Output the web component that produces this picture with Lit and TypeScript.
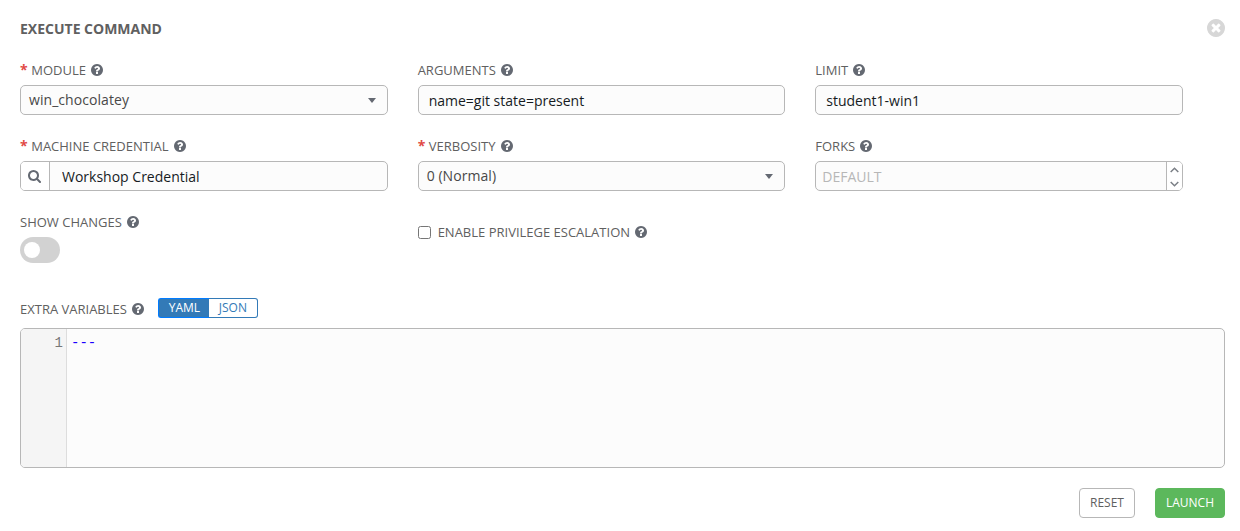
import { LitElement, html, css, svg, nothing } from "lit";
import { customElement, state } from "lit/decorators.js";

const CIRCLE =
  "m387-226q0 209-103 385.5t-279.5 279.5-385.5 103-385.5-103-279.5-279.5-103-385.5 103-385.5 279.5-279.5 385.5-103 385.5 103 279.5 279.5 103 385.5z";
const PATHS = {
  help: "M1024 1376v-192q0-14-9-23t-23-9h-192q-14 0-23 9t-9 23v192q0 14 9 23t23 9h192q14 0 23-9t9-23zm256-672q0-88-55.5-163t-138.5-116-170-41q-243 0-371 213-15 24 8 42l132 100q7 6 19 6 16 0 25-12 53-68 86-92 34-24 86-24 48 0 85.5 26t37.5 59q0 38-20 61t-68 45q-63 28-115.5 86.5t-52.5 125.5v36q0 14 9 23t23 9h192q14 0 23-9t9-23q0-19 21.5-49.5t54.5-49.5q32-18 49-28.5t46-35 44.5-48 28-60.5 12.5-81zm384 192q0 209-103 385.5t-279.5 279.5-385.5 103-385.5-103-279.5-279.5-103-385.5 103-385.5 279.5-279.5 385.5-103 385.5 103 279.5 279.5 103 385.5z",
  close:
    "M1277 1122q0-26-19-45l-181-181 181-181q19-19 19-45 0-27-19-46l-90-90q-19-19-46-19-26 0-45 19l-181 181-181-181q-19-19-45-19-27 0-46 19l-90 90q-19 19-19 46 0 26 19 45l181 181-181 181q-19 19-19 45 0 27 19 46l90 90q19 19 46 19 26 0 45-19l181-181 181 181q19 19 45 19 27 0 46-19l90-90q19-19 19-46z" +
    CIRCLE,
  search:
    "M1216 832q0-185-131.5-316.5t-316.5-131.5-316.5 131.5-131.5 316.5 131.5 316.5 316.5 131.5 316.5-131.5 131.5-316.5zm512 832q0 52-38 90t-90 38q-54 0-90-38l-343-342q-179 124-399 124-143 0-273.5-55.5t-225-150-150-225-55.5-273.5 55.5-273.5 150-225 225-150 273.5-55.5 273.5 55.5 225 150 150 225 55.5 273.5q0 220-124 399l343 343q37 37 37 90z",
};

const icon = (name: keyof typeof PATHS, box: string) => html`
  <svg class="icon ${name}" viewBox=${box} aria-hidden="true">${svg`<path d=${PATHS[name]} />`}</svg>
`;
const help = () => icon("help", "128 128 1536 1536");

@customElement("app-root")
export class AppRoot extends LitElement {
  @state() private showChanges = false;
  @state() private format = "YAML";

  static styles = css`
    :host {
      display: block;
      box-sizing: border-box;
      height: 531px;
      padding: 18px 15px 0 20px;
      overflow: hidden;
      background: #fff;
      color: #606060;
      font-family: "Open Sans", sans-serif;
      font-size: 14px;
    }
    * { box-sizing: border-box; }
    button, input { font: inherit; margin: 0; }
    .icon { display: block; flex: none; fill: #646972; }
    .help { width: 12px; height: 12px; margin-left: 5px; }
    .header { display: flex; justify-content: space-between; height: 43px; }
    .title { margin: 0; font-size: 14px; line-height: 22px; font-weight: 700; color: #606060; }
    .close-button { padding: 0; border: 0; background: none; height: 18px; margin-top: 1px; }
    .close { width: 18px; height: 18px; fill: #d7d7d7; }
    .grid {
      display: grid;
      grid-template-columns: repeat(3, 367.65px);
      grid-template-rows: 76px 76px 84px;
      column-gap: 30px;
    }
    .label { display: flex; align-items: center; height: 18px; font-size: 13px; line-height: 18px; white-space: nowrap; }
    .required { color: #e14a46; font-size: 14px; font-weight: 700; margin-right: 3.6px; width: 7.6px; line-height: 18px; }
    .control {
      display: flex;
      height: 30px;
      margin-top: 6px;
      border: 1px solid #b7b7b7;
      border-radius: 5px;
      background: #fcfcfc;
      overflow: hidden;
    }
    .select { align-items: center; justify-content: space-between; padding: 0 11px 0 8px; color: #484848; }
    .value { height: 28px; line-height: 28px; letter-spacing: 0.06px; }
    .caret { width: 8px; height: 5px; fill: #646972; margin-top: 1px; }
    .text { flex: 1; min-width: 0; padding: 1px 10px 0; border: 0; outline: 0; background: none; color: #161b1f; }
    .lookup { padding-left: 12px; }
    .forks { padding-left: 6px; }
    .forks::placeholder { color: #b7b7b7; opacity: 1; }
    .search-button { display: flex; align-items: center; justify-content: center; width: 29px; padding: 0 1px 0 0; border: 0; border-right: 1px solid #b7b7b7; background: #fff; }
    .search { width: 13px; height: 13px; }
    .stepper { display: flex; flex-direction: column; width: 16px; border-left: 1px solid #b7b7b7; background: #fff; }
    .step { display: flex; align-items: center; justify-content: center; flex: 1; padding: 1px 0 0; border: 0; background: none; }
    .arrow { width: 9px; height: 6px; fill: none; stroke: #7c8087; stroke-width: 1.5; }
    .toggle { display: flex; align-items: center; width: 40px; height: 26px; margin-top: 6px; padding: 0 4px; border: 0; border-radius: 13px; background: #d2d2d2; }
    .toggle.on { justify-content: flex-end; background: #337ab7; }
    .knob { width: 16px; height: 16px; border-radius: 50%; background: #fff; }
    .check-row { display: flex; align-items: center; height: 18px; margin-top: 10px; font-size: 13px; white-space: nowrap; }
    .checkbox { width: 13px; height: 13px; margin-right: 7px; }
    .variables { display: flex; height: 31px; }
    .variables .label { margin-top: 3px; }
    .formats { display: flex; width: 100px; height: 20px; margin: 1px 0 0 14px; }
    .format { width: 49px; padding: 0; border: 1px solid #337ab7; border-left: 0; border-radius: 0 3px 3px 0; background: #fff; color: #337ab7; font-size: 12px; line-height: 18px; }
    .format:first-child { width: 51px; border-left: 1px solid #337ab7; border-right: 0; border-radius: 3px 0 0 3px; padding-left: 1px; }
    .format.active { border-color: #007bff; background: #337ab7; color: #fff; }
    .editor { display: flex; height: 140px; border: 1px solid #b7b7b7; border-radius: 5px; background: #fcfcfc; overflow: hidden; font-family: "Liberation Mono", monospace; font-size: 14px; line-height: 20px; }
    .gutter { width: 46px; padding: 4px 3px 0 0; border-right: 1px solid #ddd; background: #f5f5f5; color: #777; text-align: right; }
    .code { margin: 0; padding: 4px; font: inherit; color: #1a00ff; }
    .actions { display: flex; justify-content: flex-end; gap: 20px; margin-top: 20px; }
    .button { width: 56px; height: 30px; padding: 0; border: 1px solid #b7b7b7; border-radius: 4px; background: #fff; color: #606060; font-size: 12px; line-height: 28px; }
    .launch { width: 70px; border-color: #5cb85c; background: #5cb85c; color: #fff; }
  `;

  private label(text: string, required = false) {
    return html`<div class="label">
      ${required ? html`<span class="required">*</span>` : nothing}<span>${text}</span>${help()}
    </div>`;
  }

  private select(value: string) {
    return html`<div class="control select" role="combobox" tabindex="0">
      <span class="value">${value}</span>
      <svg class="caret" viewBox="0 0 8 5"><path d="M0 0h8L4 5z" /></svg>
    </div>`;
  }

  private arrow(d: string) {
    return html`<button class="step"><svg class="arrow" viewBox="0 0 9 6"><path d=${d} /></svg></button>`;
  }

  render() {
    return html`
      <header class="header">
        <h1 class="title">EXECUTE COMMAND</h1>
        <button class="close-button" aria-label="Close">${icon("close", "128 128 1536 1536")}</button>
      </header>
      <main>
        <div class="grid">
          <div>${this.label("MODULE", true)}${this.select("win_chocolatey")}</div>
          <div>
            ${this.label("ARGUMENTS")}
            <div class="control"><input class="text" .value=${"name=git state=present"} /></div>
          </div>
          <div>
            ${this.label("LIMIT")}
            <div class="control"><input class="text" .value=${"student1-win1"} /></div>
          </div>
          <div>
            ${this.label("MACHINE CREDENTIAL", true)}
            <div class="control">
              <button class="search-button" aria-label="Search">${icon("search", "64 128 1664 1664")}</button>
              <input class="text lookup" .value=${"Workshop Credential"} />
            </div>
          </div>
          <div>${this.label("VERBOSITY", true)}${this.select("0 (Normal)")}</div>
          <div>
            ${this.label("FORKS")}
            <div class="control">
              <input class="text forks" placeholder="DEFAULT" />
              <div class="stepper">${this.arrow("M.7 5 4.5 1.2 8.3 5")}${this.arrow("M.7 1 4.5 4.8 8.3 1")}</div>
            </div>
          </div>
          <div>
            ${this.label("SHOW CHANGES")}
            <button
              class="toggle ${this.showChanges ? "on" : ""}"
              role="switch"
              aria-label="Show changes"
              @click=${() => (this.showChanges = !this.showChanges)}
            ><span class="knob"></span></button>
          </div>
          <div>
            <label class="check-row"><input class="checkbox" type="checkbox" /><span>ENABLE PRIVILEGE ESCALATION</span>${help()}</label>
          </div>
        </div>
        <div class="variables">
          ${this.label("EXTRA VARIABLES")}
          <div class="formats">
            ${["YAML", "JSON"].map(
              (f) => html`<button class="format ${this.format === f ? "active" : ""}" @click=${() => (this.format = f)}>${f}</button>`,
            )}
          </div>
        </div>
        <div class="editor">
          <div class="gutter">1</div>
          <pre class="code">---</pre>
        </div>
      </main>
      <footer class="actions">
        <button class="button">RESET</button>
        <button class="button launch">LAUNCH</button>
      </footer>
    `;
  }
}
